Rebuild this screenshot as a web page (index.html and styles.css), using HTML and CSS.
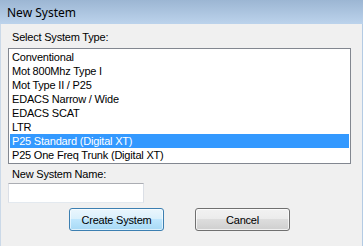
FILE: index.html
```html
<!DOCTYPE html>
<html>
<head>
  <title>New System</title>
  <link rel="stylesheet" href="styles.css">
</head>
<body>
  <div class="window">
    <div class="titlebar">New System</div>
    <div class="client">
      <label class="field-label" for="systemType">Select System Type:</label>
      <ul class="listbox" id="systemType">
        <li>Conventional</li>
        <li>Mot 800Mhz Type I</li>
        <li>Mot Type II / P25</li>
        <li>EDACS Narrow / Wide</li>
        <li>EDACS SCAT</li>
        <li>LTR</li>
        <li class="selected">P25 Standard (Digital XT)</li>
        <li>P25 One Freq Trunk (Digital XT)</li>
      </ul>
      <label class="field-label name-label" for="systemName">New System Name:</label>
      <input type="text" id="systemName" class="textbox">
      <div class="buttons">
        <button type="button" class="btn btn-default">Create System</button>
        <button type="button" class="btn">Cancel</button>
      </div>
    </div>
  </div>
</body>
</html>
```

FILE: styles.css
```css
* {
  box-sizing: border-box;
}
body {
  margin: 0;
  width: 363px;
  height: 246px;
  overflow: hidden;
  font-family: "Liberation Sans", Arial, sans-serif;
  font-size: 11px;
  letter-spacing: -0.2px;
  background-color: #f0f0f0;
}
.window {
  display: flex;
  flex-direction: column;
  height: 246px;
}
.titlebar {
  height: 24px;
  padding: 5px 0 0 7px;
  font-family: "Noto Sans", "Open Sans", sans-serif;
  font-size: 12px;
  line-height: 16px;
  letter-spacing: 0;
  color: #000;
  background: linear-gradient(to bottom, #9cb6d3, #bcd3ec);
}
.client {
  flex: 1;
  display: flex;
  flex-direction: column;
  align-items: flex-start;
  padding: 7px 0 0 7px;
  background-color: #f0f0f0;
  border-left: 1px solid #cbd9e8;
  border-right: 1px solid #b3cbe4;
}
.field-label {
  display: block;
  height: 13px;
  line-height: 13px;
  padding-left: 4px;
  color: #000;
}
.listbox {
  list-style: none;
  margin: 4px 0 0 0;
  padding: 1px;
  width: 343px;
  height: 116px;
  background-color: #fff;
  border: 1px solid #828790;
}
.listbox li {
  height: 14px;
  line-height: 14px;
  padding-left: 2px;
  color: #000;
  white-space: nowrap;
}
.listbox li.selected {
  background-color: #3399ff;
  color: #fff;
}
.name-label {
  margin-top: 4px;
}
.textbox {
  margin: 2px 0 0 0;
  width: 136px;
  height: 20px;
  padding: 0 3px;
  background-color: #fff;
  border: 1px solid #dbdfe6;
  border-top-color: #abadb3;
  border-bottom-color: #e3e9ef;
  font-family: inherit;
  font-size: 11px;
  outline: none;
}
.buttons {
  display: flex;
  gap: 31px;
  margin: 5px 0 0 61px;
}
.btn {
  width: 95px;
  height: 23px;
  padding: 0;
  font-family: inherit;
  font-size: 11px;
  letter-spacing: -0.2px;
  color: #000;
  border: 1px solid #707070;
  border-radius: 3px;
  background: linear-gradient(to bottom, #f2f2f2 0%, #ebebeb 50%, #dddddd 50%, #cfcfcf 100%);
  box-shadow: inset 0 0 0 1px rgba(255, 255, 255, 0.7);
}
.btn-default {
  border-color: #3c7fb1;
  background: linear-gradient(to bottom, #eaf6fd 0%, #d9f0fc 50%, #bee6fd 50%, #a7d9f5 100%);
  box-shadow: inset 0 0 0 1px rgba(255, 255, 255, 0.6);
}
```
